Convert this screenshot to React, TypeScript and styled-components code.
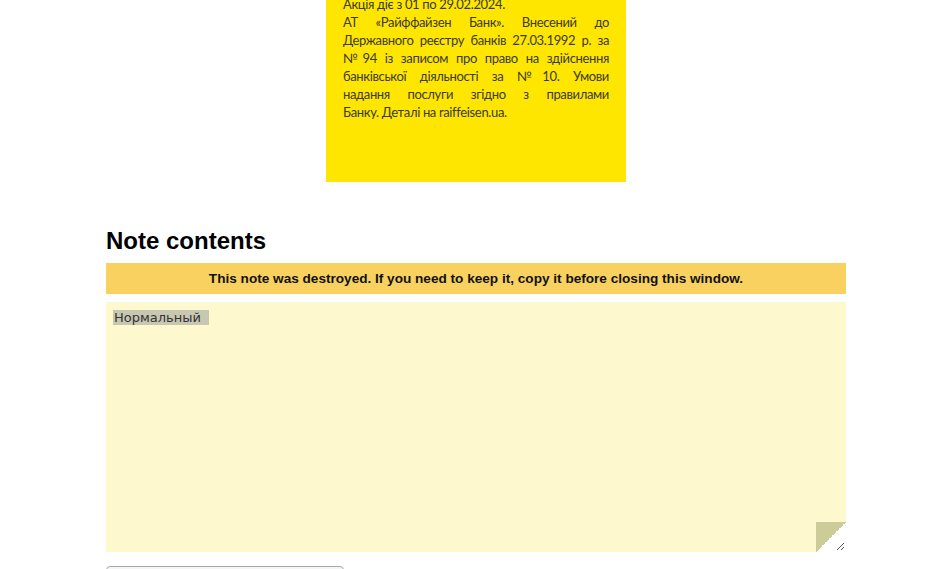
import React from 'react';
import styled, { createGlobalStyle } from 'styled-components';

const GlobalStyle = createGlobalStyle`
  html, body {
    margin: 0;
    padding: 0;
    background: #fff;
    overflow: hidden;
  }
  body {
    font-family: "Liberation Sans", Arial, sans-serif;
    color: #000;
  }
`;

const Page = styled.div`
  width: 740px;
  padding-left: 106px;
`;

const AdBox = styled.div`
  width: 300px;
  height: 198px;
  margin: -16px auto 0;
  box-sizing: border-box;
  padding: 11px 17px 0;
  background: #ffe600;
  font-family: Lato, "Open Sans", sans-serif;
  font-size: 13px;
  line-height: 18px;
  color: #3b3a28;
  letter-spacing: -0.35px;
`;

const AdLine = styled.div<{ $last?: boolean }>`
  text-align: ${({ $last }) => ($last ? 'left' : 'justify')};
  text-align-last: ${({ $last }) => ($last ? 'left' : 'justify')};
  white-space: nowrap;
`;

const Title = styled.h2`
  margin: 45px 0 0;
  font-size: 24px;
  line-height: 28px;
  font-weight: bold;
`;

const Notice = styled.div`
  margin-top: 8px;
  height: 31px;
  line-height: 31px;
  background: #f9d160;
  text-align: center;
  font-size: 13.6px;
  font-weight: bold;
  color: #111;
`;

const Note = styled.div`
  position: relative;
  margin-top: 8px;
  height: 250px;
  box-sizing: border-box;
  padding: 8px;
  background: #fdf8cd;
  font-family: "DejaVu Sans", sans-serif;
  font-size: 13px;
  line-height: 16px;
  color: #333;
`;

const Selected = styled.span`
  background: #c8c7b2;
  padding: 0 8px 0 1px;
  margin-left: -1px;
`;

const Fold = styled.div`
  position: absolute;
  right: 0;
  bottom: 0;
  width: 30px;
  height: 30px;
  background: linear-gradient(135deg, #cccc99 0 50%, #fff 50% 100%);
`;

const Grip = styled.svg`
  position: absolute;
  right: 1px;
  bottom: 1px;
`;

const Button = styled.div`
  margin-top: 14px;
  width: 238px;
  height: 30px;
  box-sizing: border-box;
  border: 1px solid #a9a9a9;
  border-radius: 4px;
  background: #f5f5f5;
`;

const adLines = [
  'Акція діє з 01 по 29.02.2024.',
  'АТ «Райффайзен Банк». Внесений до',
  'Державного реєстру банків 27.03.1992 р. за',
  '№94 із записом про право на здійснення',
  'банківської діяльності за №10. Умови',
  'надання послуги згідно з правилами',
  'Банку. Деталі на raiffeisen.ua.',
];

export default function App() {
  return (
    <>
      <GlobalStyle />
      <Page>
        <AdBox>
          {adLines.map((line, i) => (
            <AdLine key={i} $last={i === 0 || i === adLines.length - 1}>
              {line}
            </AdLine>
          ))}
        </AdBox>
        <Title>Note contents</Title>
        <Notice>This note was destroyed. If you need to keep it, copy it before closing this window.</Notice>
        <Note>
          <Selected>Нормальный</Selected>
          <Fold />
          <Grip width="9" height="9" viewBox="0 0 9 9">
            <path d="M8 1 L1 8 M8 5 L5 8" stroke="#555" strokeWidth="1" />
          </Grip>
        </Note>
        <Button />
      </Page>
    </>
  );
}
